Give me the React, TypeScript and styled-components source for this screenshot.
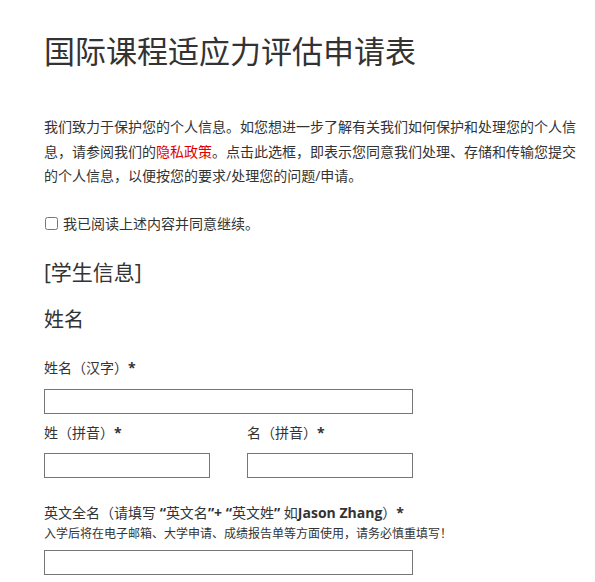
import styled, { createGlobalStyle } from "styled-components";

const GlobalStyle = createGlobalStyle`
	html, body {
		margin: 0;
		padding: 0;
		background: #fff;
	}
	body {
		font-family: "Open Sans", "Noto Sans CJK SC", sans-serif;
		color: #333;
	}
`;

export default function App() {
	return (
		<>
			<GlobalStyle />
			<Page>
				<Title>国际课程适应力评估申请表</Title>
				<Intro>
					我们致力于保护您的个人信息。如您想进一步了解有关我们如何保护和处理您的个人信息，请参阅我们的
					<PolicyLink href="#">隐私政策</PolicyLink>
					。点击此选框，即表示您同意我们处理、存储和传输您提交的个人信息，以便按您的要求/处理您的问题/申请。
				</Intro>
				<ConsentRow>
					<Checkbox type="checkbox" />
					<span>我已阅读上述内容并同意继续。</span>
				</ConsentRow>
				<SectionTitle>[学生信息]</SectionTitle>
				<GroupTitle>姓名</GroupTitle>

				<Field $top={23}>
					<Label>
						姓名（汉字）<Strong>*</Strong>
					</Label>
					<TextInput $top={10} type="text" />
				</Field>

				<FieldRow>
					<Field $top={8}>
						<Label>
							姓（拼音）<Strong>*</Strong>
						</Label>
						<TextInput $top={9} $half type="text" />
					</Field>
					<Field $top={8}>
						<Label>
							名（拼音）<Strong>*</Strong>
						</Label>
						<TextInput $top={9} $half type="text" />
					</Field>
				</FieldRow>

				<Field $top={24}>
					<Label>
						英文全名（请填写 <Strong>“</Strong>英文名<Strong>”+ “</Strong>英文姓<Strong>”</Strong> 如
						<Strong>Jason Zhang</Strong>）<Strong>*</Strong>
					</Label>
					<Hint>入学后将在电子邮箱、大学申请、成绩报告单等方面使用，请务必慎重填写！</Hint>
					<TextInput $top={6} type="text" />
				</Field>
			</Page>
		</>
	);
}

const Page = styled.div`
	width: 540px;
	padding: 31px 0 0 44px;
`;

const Title = styled.h1`
	margin: 0;
	font-size: 31px;
	line-height: 40px;
	font-weight: 400;
	color: #333;
`;

const Intro = styled.p`
	margin: 44px 0 0;
	font-size: 14px;
	line-height: 24.5px;
	color: #333;
`;

const PolicyLink = styled.a`
	color: #e00000;
	text-decoration: none;
`;

const ConsentRow = styled.label`
	display: flex;
	align-items: center;
	gap: 5px;
	margin-top: 23px;
	padding-left: 1px;
	font-size: 14px;
	line-height: 24px;
	color: #333;
`;

const Checkbox = styled.input`
	margin: 0;
	width: 13px;
	height: 13px;
`;

const SectionTitle = styled.h2`
	margin: 21px 0 0;
	font-size: 21px;
	line-height: 30px;
	font-weight: 400;
	color: #333;
`;

const GroupTitle = styled.h3`
	margin: 19px 0 0;
	font-size: 20px;
	line-height: 28px;
	font-weight: 400;
	color: #333;
`;

const Field = styled.div<{ $top: number }>`
	display: flex;
	flex-direction: column;
	align-items: flex-start;
	margin-top: ${({ $top }) => $top}px;
`;

const FieldRow = styled.div`
	display: grid;
	grid-template-columns: 166px 166px;
	column-gap: 37px;
`;

const Label = styled.label`
	font-size: 14px;
	line-height: 22px;
	color: #333;
	white-space: nowrap;
`;

const Strong = styled.b`
	font-weight: 700;
`;

const Hint = styled.div`
	font-size: 12px;
	line-height: 20px;
	color: #333;
	white-space: nowrap;
`;

const TextInput = styled.input<{ $top: number; $half?: boolean }>`
	box-sizing: border-box;
	width: ${({ $half }) => ($half ? "166px" : "369px")};
	height: 25px;
	margin-top: ${({ $top }) => $top}px;
	padding: 2px 6px;
	border: 1px solid #767676;
	border-radius: 0;
	font-family: "Open Sans", "Noto Sans CJK SC", sans-serif;
	font-size: 14px;
	background: #fff;
	outline: none;
`;
